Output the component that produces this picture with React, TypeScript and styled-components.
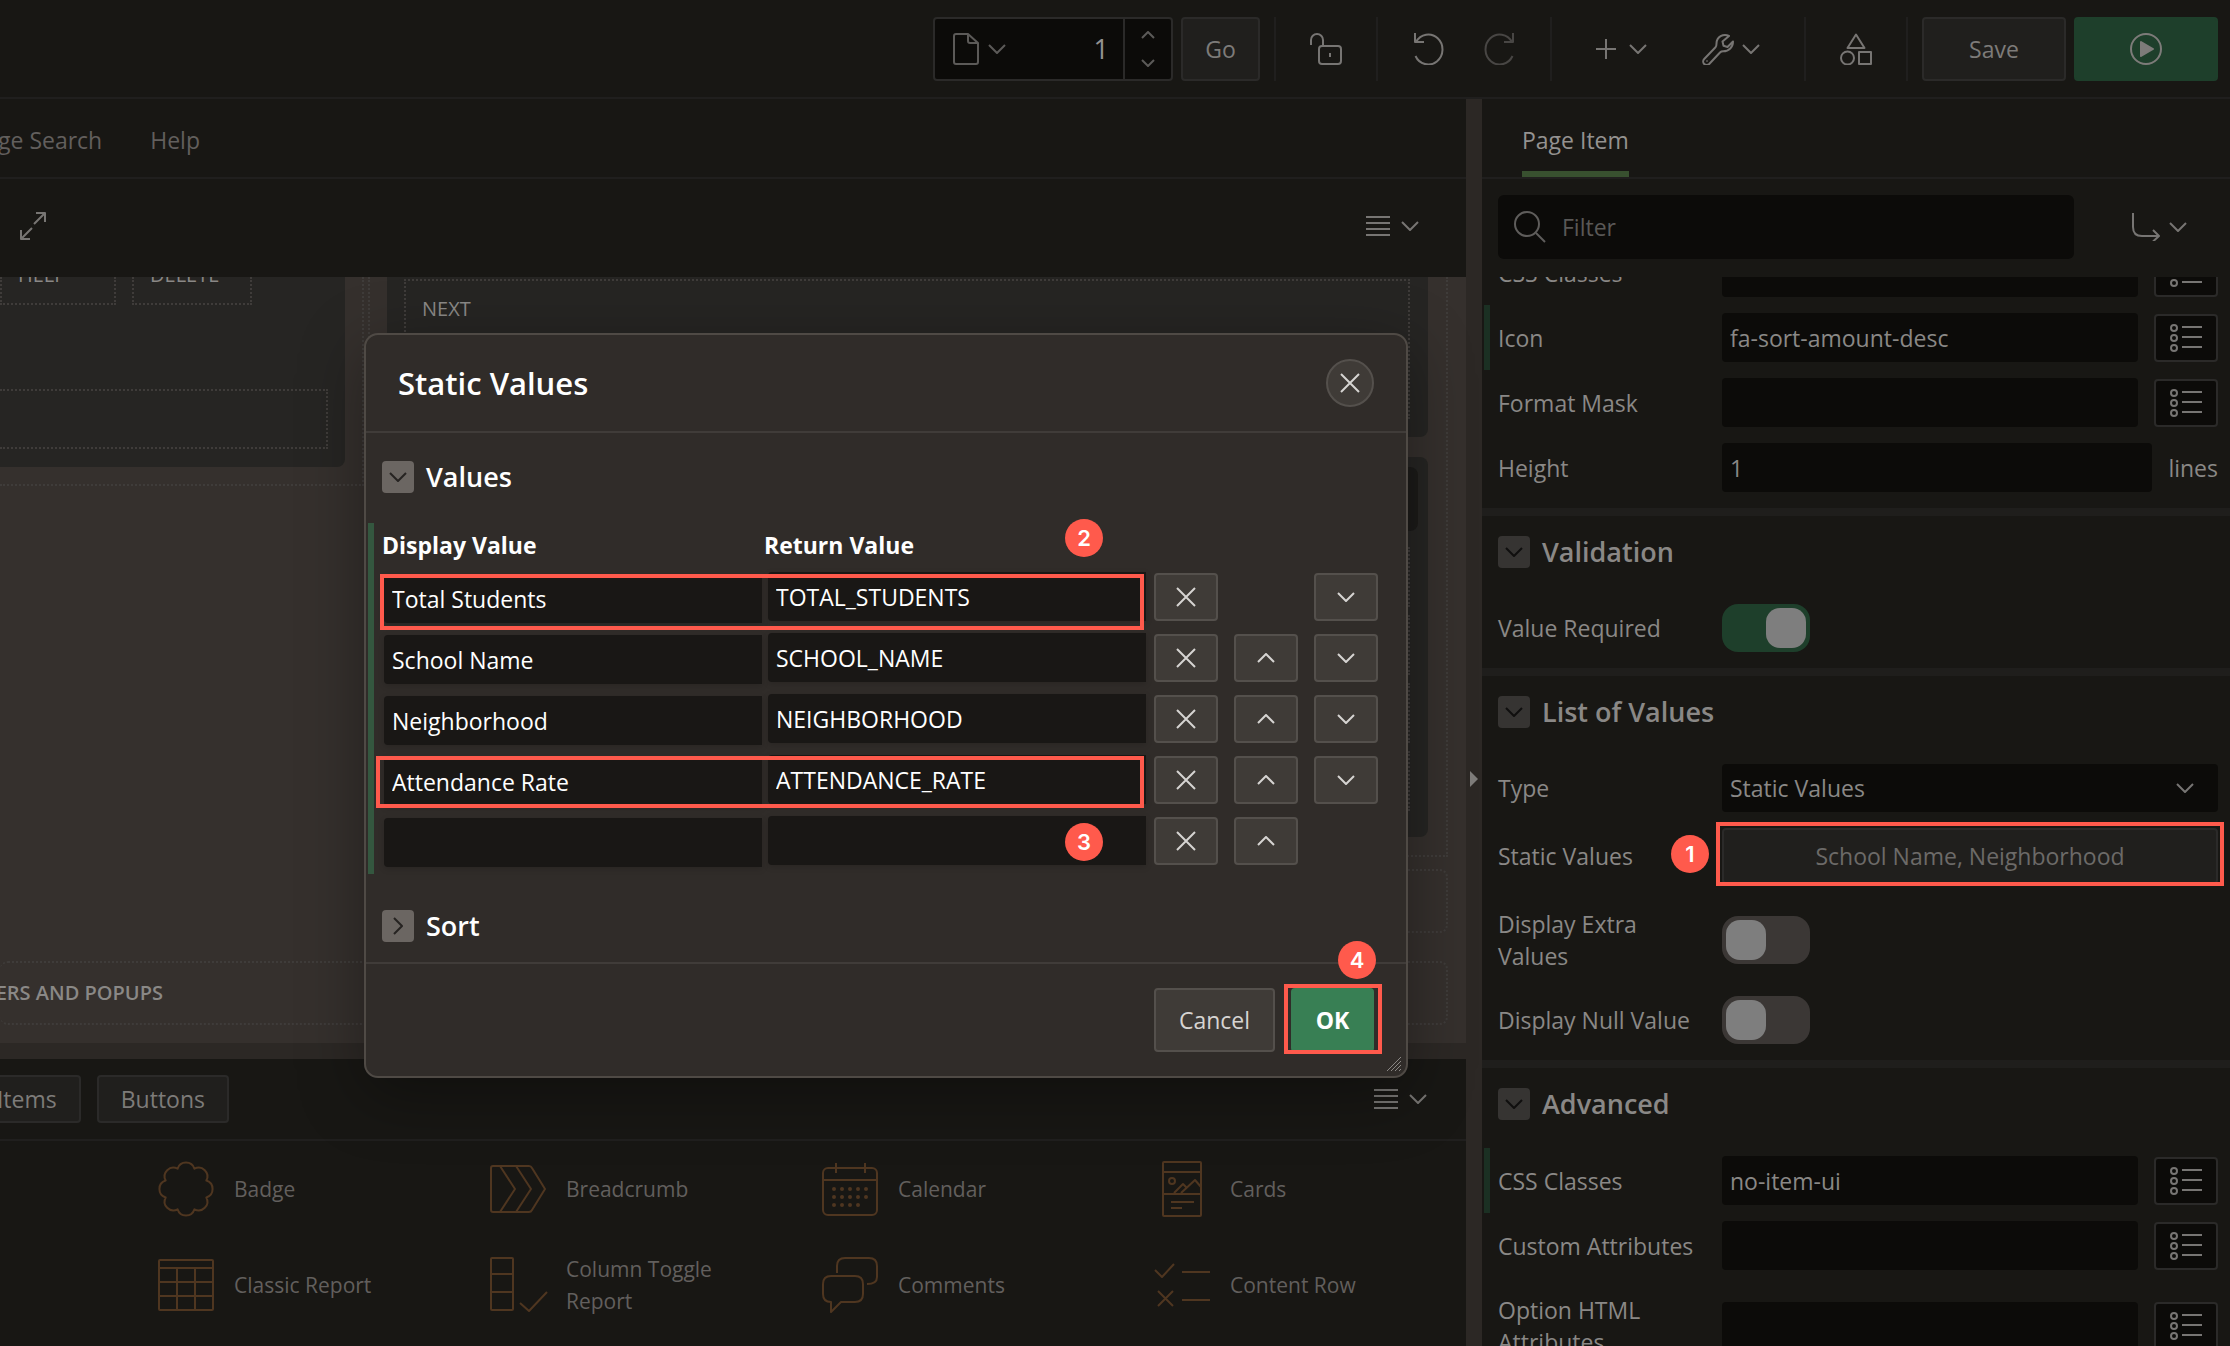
import React, { useLayoutEffect, useRef } from "react";
import styled, { createGlobalStyle, css } from "styled-components";

const c = {
  panel: "#181714",
  field: "#0c0b09",
  line: "#201f1e",
  button: "#201f1d",
  buttonLine: "#2b2a29",
  splitter: "#2c2825",
  canvas: "#35302d",
  card: "#262523",
  dotted: "#3f3c3a",
  text: "#8a8886",
  strong: "#949290",
  muted: "#625f5d",
  icon: "#777573",
  dimIcon: "#5c5a58",
  dialog: "#302c29",
  dialogLine: "#403c39",
  dialogButton: "#3f3b37",
  dialogButtonLine: "#54504c",
  mark: "#ff5a4c",
  brown: "#4f3620",
};

const GlobalStyle = createGlobalStyle`
  *, *::before, *::after { box-sizing: border-box; }
  body {
    margin: 0;
    background: ${c.panel};
    color: ${c.text};
    font: 23px/32px "Open Sans", "Noto Sans", sans-serif;
    overflow: hidden;
  }
  button, input, select { font: inherit; color: inherit; }
  button { cursor: pointer; }
`;

/* ---------- Icons ---------- */

type IconProps = { w: number; h: number; children: React.ReactNode; color?: string; sw?: number };
const Glyph = styled.svg`
  display: block;
  flex: none;
  fill: none;
  stroke: currentColor;
  stroke-linejoin: round;
`;
const Icon = ({ w, h, children, color, sw = 2 }: IconProps) => (
  <Glyph width={w} height={h} viewBox={`0 0 ${w} ${h}`} strokeWidth={sw} color={color} aria-hidden="true">
    {children}
  </Glyph>
);

const ChevronDown = () => <Icon w={18} h={10}><path d="M1 1l8 8 8-8" /></Icon>;
const ChevronUp = () => <Icon w={18} h={10}><path d="M1 9l8-8 8 8" /></Icon>;
const ChevronRight = () => <Icon w={10} h={18}><path d="M1 1l8 8-8 8" /></Icon>;
const TinyDown = () => <Icon w={14} h={8}><path d="M1 1l6 6 6-6" /></Icon>;
const TinyUp = () => <Icon w={14} h={8}><path d="M1 7l6-6 6 6" /></Icon>;
const Cross = () => <Icon w={20} h={20}><path d="M1 1l18 18M19 1L1 19" /></Icon>;
const MenuLines = () => <Icon w={24} h={20}><path d="M0 1h24M0 7h24M0 13h24M0 19h24" /></Icon>;
const FileIcon = () => <Icon w={26} h={32}><path d="M3 1h12l10 9v19q0 2-2 2H3q-2 0-2-2V3q0-2 2-2zM15 1v7q0 2 2 2h8" /></Icon>;
const LockIcon = () => (
  <Icon w={32} h={32}><rect x="9" y="13" width="22" height="18" rx="3" /><path d="M1 12V7a6 6 0 0 1 12 0v6M20 20v4" /></Icon>
);
const UndoIcon = () => <Icon w={30} h={32}><path d="M1 0v9h9M2 9A14.2 15 0 1 1 1.500 23" /></Icon>;
const RedoIcon = () => <Icon w={30} h={32}><path d="M29 0v9h-9M28 9A14.200 15 0 1 0 28.500 23" /></Icon>;
const PlusIcon = () => <Icon w={20} h={20}><path d="M10 0v20M0 10h20" /></Icon>;
const WrenchIcon = () => (
  <Icon w={32} h={32}>
    <path d="M27 3A8.500 8.500 0 0 0 14.500 10.500c0 2-.3 3-1 3.700L2.200 26a3.500 3.500 0 0 0 5 5L18 19.500c.8-.8 1.800-1.200 3.200-1.200C27 18.300 31 14 31 8.500l-5.500 5.500-4-1.200-1-4.300z" />
    <path d="M5 27.500v1" />
  </Icon>
);
const ShapesIcon = () => (
  <Icon w={32} h={32}><path d="M16 1.500L24.500 15h-17z" /><circle cx="7.500" cy="25" r="6.500" /><rect x="19" y="19" width="12" height="12" /></Icon>
);
const PlayIcon = () => (
  <Icon w={32} h={32}><circle cx="16" cy="16" r="15" /><path d="M11 9l12 7-12 7z" fill="currentColor" /></Icon>
);
const ExpandIcon = () => (
  <Icon w={26} h={28}><path d="M16 1h9v9M25 1L14 12M10 27H1v-9M1 27l11-11" /></Icon>
);
const SearchIcon = () => <Icon w={32} h={32}><circle cx="13" cy="13" r="12" /><path d="M22 22l9 9" /></Icon>;
const GoToIcon = () => <Icon w={28} h={28}><path d="M1 0v14q0 9 9 9h17M21 17l6 6-6 5.500" /></Icon>;
const ListIcon = () => (
  <Icon w={32} h={28}>
    <circle cx="4" cy="4" r="3" /><circle cx="4" cy="14" r="3" /><circle cx="4" cy="24" r="3" />
    <path d="M12 3h20M12 13h20M12 23h20" />
  </Icon>
);
const GripIcon = () => <Icon w={16} h={16} sw={1}><path d="M1 15L15 1M5 15L15 5M9 15l6-6M13 15l2-2" /></Icon>;

const rosette = (() => {
  const pts = Array.from({ length: 8 }, (_, i) => {
    const a = ((22.5 + 45 * i) * Math.PI) / 180;
    return `${(28 + 22 * Math.cos(a)).toFixed(2)} ${(28 + 22 * Math.sin(a)).toFixed(2)}`;
  });
  return `M${pts[7]}` + pts.map((p) => `A8.800 8.800 0 0 1 ${p}`).join("") + "z";
})();

const BadgeIcon = () => <Icon w={56} h={56}><path d={rosette} /></Icon>;
const BreadcrumbIcon = () => (
  <Icon w={56} h={48}><path d="M3 1h36q2 0 3 2l13 21-13 21q-1 2-3 2H3q-2 0-2-2V3q0-2 2-2zM10 1l15 23-15 23M26 1l15 23-15 23" /></Icon>
);
const CalendarIcon = () => (
  <Icon w={56} h={54}>
    <rect x="1" y="6" width="54" height="47" rx="5" />
    <path d="M1 18h54M14 1v10M43 1v10" />
    {[27, 35, 43].map((y) =>
      [12, 20, 28, 36, 44].filter((x) => !(y === 43 && x === 44)).map((x) => (
        <circle key={`${x}-${y}`} cx={x} cy={y} r="2" fill="currentColor" stroke="none" />
      ))
    )}
  </Icon>
);
const CardsIcon = () => (
  <Icon w={40} h={56}>
    <rect x="1" y="1" width="38" height="54" rx="1" />
    <path d="M1 11h38M1 33h38M12 32l9-9 4 4M19 32l14-13 6 7M9 41h23M9 47h11" />
    <circle cx="10" cy="20" r="3" />
  </Icon>
);
const TableIcon = () => (
  <Icon w={56} h={52}><rect x="1" y="1" width="54" height="50" rx="1" /><path d="M1 9h54M1 23h54M1 37h54M19 9v42M37 9v42" /></Icon>
);
const ColumnToggleIcon = () => (
  <Icon w={58} h={56}><rect x="1" y="1" width="22" height="52" rx="1" /><path d="M1 17h22M1 35h22M30 46l9 8 18-19" /></Icon>
);
const CommentsIcon = () => (
  <Icon w={56} h={56}>
    <path d="M15 16V9q0-8 8-8h24q8 0 8 8v11q0 7-10 7" />
    <path d="M9 19h24q8 0 8 8v10q0 8-8 8H19L9 55V45q-8 0-8-8V27q0-8 8-8z" />
  </Icon>
);
const ContentRowIcon = () => (
  <Icon w={56} h={44}><path d="M1 7l7 7L20 1M4 28l15 15M19 28L4 43M28 9h28M28 37h28" /></Icon>
);

/* ---------- Shared controls ---------- */

const IconButton = styled.button<{ $gap?: number; $dim?: boolean }>`
  display: flex;
  align-items: center;
  gap: ${(p) => p.$gap ?? 11}px;
  padding: 0;
  border: 0;
  background: none;
  color: ${(p) => (p.$dim ? c.dimIcon : c.icon)};
  &:disabled { color: #484644; }
`;

const Button = styled.button<{ $width?: number; $height?: number; $primary?: boolean }>`
  display: flex;
  align-items: center;
  justify-content: center;
  flex: none;
  width: ${(p) => (p.$width ? `${p.$width}px` : "auto")};
  height: ${(p) => p.$height ?? 64}px;
  padding: 0 22px;
  border: 2px solid ${(p) => (p.$primary ? "#1e3f2b" : c.buttonLine)};
  border-radius: 4px;
  background: ${(p) => (p.$primary ? "#1e3f2b" : c.button)};
  color: #7d7b79;
`;

const Field = styled.input`
  flex: 1;
  min-width: 0;
  height: 49px;
  padding: 0 8px;
  border: 0;
  border-radius: 4px;
  background: ${c.field};
  color: ${c.text};
  outline: none;
`;

const Toggle = styled.button<{ $light?: boolean }>`
  display: grid;
  place-items: center;
  width: 32px;
  height: 32px;
  padding: 0;
  border: 0;
  border-radius: 4px;
  background: ${(p) => (p.$light ? "#6b6662" : "#363432")};
  color: ${(p) => (p.$light ? "#262321" : "#100f0e")};
`;

const SectionTitle = styled.h2`
  margin: 0;
  font-size: 27px;
  font-weight: 600;
  line-height: 32px;
`;

const Switch = styled.input.attrs({ type: "checkbox", role: "switch" })`
  appearance: none;
  flex: none;
  width: 88px;
  height: 48px;
  margin: 0;
  padding: 4px;
  border-radius: 16px;
  background: #3b3735;
  &::before {
    content: "";
    display: block;
    width: 40px;
    height: 40px;
    border-radius: 14px;
    background: #7e7e7e;
  }
  &:checked { background: #1e3f2b; }
  &:checked::before { margin-left: 40px; }
`;

const NumberPin = styled.span<{ $x: number; $y: number }>`
  position: absolute;
  left: ${(p) => p.$x}px;
  top: ${(p) => p.$y}px;
  display: grid;
  place-items: center;
  width: 38px;
  height: 38px;
  border-radius: 50%;
  background: ${c.mark};
  color: #fff;
  font: 600 22px/38px Inter, "Liberation Sans", sans-serif;
`;

const Outline = styled.span<{ $x: number; $y: number; $w: number; $h: number }>`
  position: absolute;
  left: ${(p) => p.$x}px;
  top: ${(p) => p.$y}px;
  width: ${(p) => p.$w}px;
  height: ${(p) => p.$h}px;
  border: 4px solid ${c.mark};
  pointer-events: none;
`;

/* ---------- Page frame ---------- */

const Page = styled.div`
  display: flex;
  flex-direction: column;
  height: 100vh;
`;

const TopBar = styled.header`
  display: flex;
  align-items: center;
  justify-content: flex-end;
  flex: none;
  height: 99px;
  padding: 0 12px;
  border-bottom: 2px solid ${c.line};
`;

const ToolGroup = styled.div<{ $pad: number; $gap?: number }>`
  display: flex;
  align-items: center;
  height: 64px;
  gap: ${(p) => p.$gap ?? 0}px;
  padding: 0 ${(p) => p.$pad}px;
  border-left: 2px solid ${c.line};
`;

const PagePicker = styled.div`
  display: flex;
  height: 64px;
  width: 240px;
  border: 2px solid ${c.buttonLine};
  border-radius: 4px;
  background: ${c.field};
  padding-left: 18px;
`;
const PageNumber = styled.input`
  flex: 1;
  min-width: 0;
  padding: 0 14px;
  border: 0;
  background: none;
  font-size: 27px;
  text-align: right;
  color: ${c.strong};
`;
const Spinner = styled.div`
  display: flex;
  flex-direction: column;
  align-items: center;
  justify-content: space-between;
  width: 48px;
  padding: 12px 0;
  border-left: 2px solid ${c.buttonLine};
`;
const GoWrap = styled.div`
  display: flex;
  gap: 8px;
  padding-right: 14px;
`;
const SaveWrap = styled.div`
  display: flex;
  gap: 8px;
  padding-left: 14px;
  border-left: 2px solid ${c.line};
`;

const Workspace = styled.div`
  display: grid;
  grid-template-columns: minmax(0, 1fr) 16px 748px;
  flex: 1;
  min-height: 0;
`;
const MainColumn = styled.main`
  display: flex;
  flex-direction: column;
  min-width: 0;
  min-height: 0;
`;
const SideSplitter = styled.div`
  display: flex;
  align-items: center;
  justify-content: center;
  padding-top: 112px;
  background: ${c.splitter};
`;
const SplitterArrow = styled.span`
  border: 8px solid transparent;
  border-width: 8px 0 8px 8px;
  border-left-color: #7f7d7b;
`;

const TabStrip = styled.nav<{ $indent?: number }>`
  display: flex;
  flex: none;
  height: 80px;
  border-bottom: 2px solid ${c.line};
  padding-left: ${(p) => p.$indent ?? 0}px;
`;
const ClippedEnd = styled.div<{ $width: number; $gap: number }>`
  display: flex;
  align-items: center;
  justify-content: flex-end;
  width: ${(p) => p.$width}px;
  gap: ${(p) => p.$gap}px;
  overflow: hidden;
  white-space: nowrap;
`;
const Tab = styled.a<{ $active?: boolean }>`
  flex: none;
  padding: 25px 0 14px;
  height: 78px;
  text-decoration: none;
  color: ${(p) => (p.$active ? c.strong : c.muted)};
  ${(p) => p.$active && css`border-bottom: 6px solid #38502f;`}
`;

const Toolbar = styled.div`
  display: flex;
  align-items: center;
  justify-content: space-between;
  flex: none;
  height: 98px;
  padding: 0 47px 4px 20px;
`;

/* ---------- Layout canvas ---------- */

const Canvas = styled.section`
  display: flex;
  flex-direction: column;
  flex: 1;
  min-height: 0;
  overflow: hidden;
  padding-right: 18px;
  background: ${c.canvas};
`;
const Columns = styled.div`
  display: flex;
  gap: 4px;
`;
const dots = css`border: 2px dotted ${c.dotted};`;
const LeftRegion = styled.div`
  ${dots}
  border-top: 0;
  border-left: 0;
  align-self: flex-start;
  width: 364px;
  padding: 0 17px 17px 0;
`;
const RightColumn = styled.div`
  flex: 1;
  display: flex;
  flex-direction: column;
  gap: 12px;
`;
const RightRegion = styled.div`
  ${dots}
  border-top: 0;
  display: flex;
  flex-direction: column;
  gap: 20px;
  padding: 0 18px 18px 17px;
`;
const Card = styled.div<{ $radius: string }>`
  background: ${c.card};
  border-radius: ${(p) => p.$radius};
`;
const LeftCard = styled(Card)`
  height: 190px;
  padding-right: 17px;
`;
const SlotRow = styled.div`
  display: flex;
  gap: 16px;
`;
const Slot = styled.div<{ $width: number }>`
  ${dots}
  border-top: 0;
  display: flex;
  align-items: flex-end;
  justify-content: flex-start;
  width: ${(p) => p.$width}px;
  height: 28px;
  padding: 0 16px 12px;
  overflow: hidden;
  font-size: 20px;
`;
const WideSlot = styled.div`
  ${dots}
  border-left: 0;
  height: 60px;
  margin-top: 84px;
`;
const NextCard = styled(Card)`
  height: 160px;
  padding: 2px 18px 18px 17px;
`;
const NextSlot = styled.div`
  ${dots}
  height: 140px;
  padding: 12px 16px;
  font-size: 20px;
`;
const BodyCard = styled(Card)`
  height: 380px;
  padding: 10px;
`;
const BodyHeader = styled.div`
  height: 64px;
  border-radius: 8px;
  background: #1c1b19;
`;
const BodySlots = styled.div`
  display: grid;
  gap: 8px;
  padding: 16px 8px;
`;
const BodySlot = styled.div`
  ${dots}
  height: 60px;
`;
const Strip = styled.div`
  ${dots}
  flex: none;
  height: 64px;
  border-radius: 8px;
`;
const FooterStrip = styled(Strip)`
  display: flex;
  align-items: center;
  margin-top: 28px;
  border-left: 0;
  font-size: 20px;
  font-weight: 600;
  line-height: 28px;
`;

/* ---------- Gallery ---------- */

const RowSplitter = styled.div`
  flex: none;
  height: 16px;
  background: ${c.splitter};
`;
const Gallery = styled.section`
  flex: none;
  height: 287px;
  overflow: hidden;
`;
const GalleryBar = styled.div`
  display: flex;
  align-items: center;
  justify-content: space-between;
  height: 82px;
  padding-right: 39px;
  border-bottom: 2px solid ${c.line};
`;
const GalleryGrid = styled.ul`
  display: grid;
  grid-template-columns: repeat(4, minmax(332px, 1fr));
  grid-auto-rows: 96px;
  margin: 0;
  padding: 0 0 0 142px;
  list-style: none;
`;
const GalleryItem = styled.li`
  display: flex;
  align-items: center;
  gap: 20px;
  padding-left: 16px;
  font-size: 21px;
  color: ${c.muted};
`;
const GalleryIcon = styled.span`
  display: grid;
  place-items: center;
  flex: none;
  width: 56px;
  color: ${c.brown};
`;
const GalleryLabel = styled.span`
  max-width: 170px;
`;

/* ---------- Property panel ---------- */

const Side = styled.aside`
  display: flex;
  flex-direction: column;
  min-height: 0;
`;
const FilterBar = styled.div`
  display: flex;
  align-items: center;
  justify-content: space-between;
  flex: none;
  height: 98px;
  padding: 0 43px 2px 16px;
`;
const FilterBox = styled.label`
  display: flex;
  align-items: center;
  gap: 8px;
  width: 576px;
  height: 64px;
  padding: 0 16px;
  border-radius: 6px;
  background: ${c.field};
  color: #5f5d5b;
`;
const FilterInput = styled(Field)`
  background: none;
  &::placeholder { color: #5a5856; opacity: 1; }
`;
const Scroller = styled.div`
  flex: 1;
  min-height: 0;
  overflow: hidden;
`;
const Group = styled.section`
  padding-bottom: 8px;
  & + & { border-top: 8px solid #1f1e1c; }
`;
const GroupHead = styled.div`
  display: flex;
  align-items: center;
  gap: 12px;
  padding: 20px 16px 28px;
  color: ${c.text};
`;
const PropRow = styled.div<{ $changed?: boolean }>`
  display: grid;
  grid-template-columns: 216px minmax(0, 1fr);
  align-items: center;
  column-gap: 16px;
  margin-left: 2px;
  padding-right: 12px;
  border-left: 6px solid ${(p) => (p.$changed ? "#1b3023" : "transparent")};
`;
const PropLabel = styled.label`
  padding: 16px 0 16px 8px;
`;
const PropControl = styled.div`
  position: relative;
  display: flex;
  align-items: center;
  gap: 16px;
  padding: 8px 0;
`;
const ListButton = styled.button`
  display: grid;
  place-items: center;
  flex: none;
  width: 64px;
  height: 48px;
  padding: 0;
  border: 2px solid ${c.buttonLine};
  border-radius: 4px;
  background: ${c.field};
  color: ${c.icon};
`;
const Select = styled.select`
  appearance: none;
  flex: 1;
  height: 48px;
  padding: 0 8px;
  border: 0;
  border-radius: 4px;
  background: ${c.field};
  color: ${c.text};
`;
const SelectArrow = styled.span`
  position: absolute;
  right: 24px;
  color: ${c.icon};
  pointer-events: none;
`;
const Anchor = styled.div`
  position: relative;
  flex: 1;
`;
const ValuesButton = styled(Button)`
  width: 100%;
  color: #6c6a68;
`;

/* ---------- Dialog ---------- */

const Dialog = styled.div`
  position: absolute;
  left: 364px;
  top: 333px;
  width: 1044px;
  border: 2px solid #4f4a45;
  border-radius: 14px;
  background: ${c.dialog};
  box-shadow: 0 16px 64px rgba(0, 0, 0, 0.35);
  color: #fff;
`;
const DialogHead = styled.div`
  display: flex;
  align-items: center;
  justify-content: space-between;
  height: 98px;
  padding: 0 32px;
  border-bottom: 2px solid ${c.dialogLine};
`;
const DialogTitle = styled.h1`
  margin: 0;
  font-size: 31px;
  line-height: 40px;
  font-weight: 600;
`;
const DialogButton = styled(Button)<{ $round?: boolean; $ok?: boolean }>`
  padding: 0;
  border-color: ${(p) => (p.$ok ? "#387f54" : c.dialogButtonLine)};
  border-radius: ${(p) => (p.$round ? "50%" : "4px")};
  background: ${(p) => (p.$ok ? "#387f54" : c.dialogButton)};
  color: ${(p) => (p.$ok ? "#fff" : "#d6d4d2")};
  font-weight: ${(p) => (p.$ok ? 700 : 400)};
`;
const DialogBody = styled.div`
  height: 529px;
  overflow: hidden;
  padding-left: 2px;
`;
const DialogGroupHead = styled.div`
  display: flex;
  align-items: center;
  gap: 12px;
  padding: 28px 14px 30px;
`;
const ChangedBlock = styled.div`
  margin-bottom: 8px;
  padding-bottom: 3px;
  border-left: 6px solid #34573f;
`;
const Grid = styled.table`
  width: 1020px;
  border-collapse: collapse;
  table-layout: fixed;
  th {
    height: 43px;
    padding: 0;
    text-align: left;
    font-weight: 700;
  }
  th:first-child { padding-left: 8px; }
  td { height: 61px; padding: 0; }
  td:nth-child(1) { padding: 4px 0 0 10px; }
  td:nth-child(2) { padding-left: 4px; }
`;
const Cell = styled(Field)`
  display: block;
  width: 378px;
  border-radius: 4px 0 0 4px;
  background: #191715;
  color: #fff;
  box-shadow: 0 2px 6px rgba(0, 0, 0, 0.15);
`;
const DialogFoot = styled.div`
  display: flex;
  justify-content: flex-end;
  gap: 16px;
  padding: 24px 32px;
  border-top: 2px solid ${c.dialogLine};
`;
const Grip = styled.span`
  position: absolute;
  right: 4px;
  bottom: 4px;
  color: #8a8784;
`;

/* ---------- Data ---------- */

const VALUES = [
  ["Total Students", "TOTAL_STUDENTS"],
  ["School Name", "SCHOOL_NAME"],
  ["Neighborhood", "NEIGHBORHOOD"],
  ["Attendance Rate", "ATTENDANCE_RATE"],
  ["", ""],
];

const COMPONENTS: [string, React.ReactNode][] = [
  ["Badge", <BadgeIcon />],
  ["Breadcrumb", <BreadcrumbIcon />],
  ["Calendar", <CalendarIcon />],
  ["Cards", <CardsIcon />],
  ["Classic Report", <TableIcon />],
  ["Column Toggle Report", <ColumnToggleIcon />],
  ["Comments", <CommentsIcon />],
  ["Content Row", <ContentRowIcon />],
];

const SCROLL_START = 37;

/* ---------- Components ---------- */

const TextProp = ({ id, label, value = "", list, changed, unit }: {
  id: string; label: string; value?: string; list?: boolean; changed?: boolean; unit?: string;
}) => (
  <PropRow $changed={changed}>
    <PropLabel htmlFor={id}>{label}</PropLabel>
    <PropControl>
      <Field id={id} defaultValue={value} />
      {list && <ListButton aria-label={`Pick ${label}`}><ListIcon /></ListButton>}
      {unit && <span>{unit}</span>}
    </PropControl>
  </PropRow>
);

const SwitchProp = ({ id, label, on }: { id: string; label: string; on?: boolean }) => (
  <PropRow>
    <PropLabel htmlFor={id}>{label}</PropLabel>
    <PropControl><Switch id={id} defaultChecked={on} /></PropControl>
  </PropRow>
);

const PropGroup = ({ title, children }: { title: string; children: React.ReactNode }) => (
  <Group>
    <GroupHead>
      <Toggle aria-label={`Collapse ${title}`}><ChevronDown /></Toggle>
      <SectionTitle>{title}</SectionTitle>
    </GroupHead>
    {children}
  </Group>
);

function Properties() {
  const scroller = useRef<HTMLDivElement>(null);
  useLayoutEffect(() => {
    if (scroller.current) scroller.current.scrollTop = SCROLL_START;
  }, []);
  return (
    <Side>
      <TabStrip $indent={40}><Tab href="#item" $active>Page Item</Tab></TabStrip>
      <FilterBar>
        <FilterBox>
          <SearchIcon />
          <FilterInput placeholder="Filter" aria-label="Filter" />
        </FilterBox>
        <IconButton aria-label="Go to group" $gap={9}><GoToIcon /><ChevronDown /></IconButton>
      </FilterBar>
      <Scroller ref={scroller}>
        <Group>
          <TextProp id="css1" label="CSS Classes" list />
          <TextProp id="icon" label="Icon" value="fa-sort-amount-desc" list changed />
          <TextProp id="mask" label="Format Mask" list />
          <TextProp id="height" label="Height" value="1" unit="lines" />
        </Group>
        <PropGroup title="Validation">
          <SwitchProp id="required" label="Value Required" on />
        </PropGroup>
        <PropGroup title="List of Values">
          <PropRow>
            <PropLabel htmlFor="type">Type</PropLabel>
            <PropControl>
              <Select id="type" defaultValue="static"><option value="static">Static Values</option></Select>
              <SelectArrow><ChevronDown /></SelectArrow>
            </PropControl>
          </PropRow>
          <PropRow>
            <PropLabel htmlFor="static">Static Values</PropLabel>
            <PropControl>
              <Anchor>
                <ValuesButton id="static" $height={56}>School Name, Neighborhood</ValuesButton>
                <Outline $x={-6} $y={-6} $w={508} $h={64} />
                <NumberPin $x={-51} $y={7}>1</NumberPin>
              </Anchor>
            </PropControl>
          </PropRow>
          <SwitchProp id="extra" label="Display Extra Values" />
          <SwitchProp id="null" label="Display Null Value" />
        </PropGroup>
        <PropGroup title="Advanced">
          <TextProp id="css2" label="CSS Classes" value="no-item-ui" list changed />
          <TextProp id="custom" label="Custom Attributes" list />
          <TextProp id="option" label="Option HTML Attributes" list />
        </PropGroup>
      </Scroller>
    </Side>
  );
}

const StaticValuesDialog = () => (
  <Dialog role="dialog" aria-labelledby="dialog-title">
    <DialogHead>
      <DialogTitle id="dialog-title">Static Values</DialogTitle>
      <DialogButton $round $width={48} $height={48} aria-label="Close"><Cross /></DialogButton>
    </DialogHead>
    <DialogBody>
      <DialogGroupHead>
        <Toggle $light aria-label="Collapse Values"><ChevronDown /></Toggle>
        <SectionTitle>Values</SectionTitle>
      </DialogGroupHead>
      <ChangedBlock>
        <Grid>
          <colgroup>
            <col width="390" /><col width="390" /><col width="80" /><col width="80" /><col width="80" />
          </colgroup>
          <thead>
            <tr><th>Display Value</th><th>Return Value</th><th colSpan={3} aria-label="Actions" /></tr>
          </thead>
          <tbody>
            {VALUES.map(([display, value], i) => (
              <tr key={i}>
                <td><Cell defaultValue={display} aria-label={`Display value ${i + 1}`} /></td>
                <td><Cell defaultValue={value} aria-label={`Return value ${i + 1}`} /></td>
                <td><DialogButton $width={64} $height={48} aria-label="Remove"><Cross /></DialogButton></td>
                <td>{i > 0 && <DialogButton $width={64} $height={48} aria-label="Move up"><ChevronUp /></DialogButton>}</td>
                <td>{i < 4 && <DialogButton $width={64} $height={48} aria-label="Move down"><ChevronDown /></DialogButton>}</td>
              </tr>
            ))}
          </tbody>
        </Grid>
      </ChangedBlock>
      <DialogGroupHead>
        <Toggle $light aria-label="Expand Sort"><ChevronRight /></Toggle>
        <SectionTitle>Sort</SectionTitle>
      </DialogGroupHead>
    </DialogBody>
    <DialogFoot>
      <DialogButton $width={121}>Cancel</DialogButton>
      <DialogButton $width={83} $ok>OK</DialogButton>
    </DialogFoot>
    <Grip><GripIcon /></Grip>
    <Outline $x={14} $y={239} $w={764} $h={56} />
    <Outline $x={10} $y={421} $w={768} $h={52} />
    <Outline $x={918} $y={649} $w={98} $h={70} />
    <NumberPin $x={699} $y={184}>2</NumberPin>
    <NumberPin $x={699} $y={488}>3</NumberPin>
    <NumberPin $x={972} $y={606}>4</NumberPin>
  </Dialog>
);

const LayoutCanvas = () => (
  <Canvas>
    <Columns>
      <LeftRegion>
        <LeftCard $radius="0 0 8px 0">
          <SlotRow><Slot $width={116}>HELP</Slot><Slot $width={120}>DELETE</Slot></SlotRow>
          <WideSlot />
        </LeftCard>
      </LeftRegion>
      <RightColumn>
        <RightRegion>
          <NextCard $radius="0 0 8px 8px"><NextSlot>NEXT</NextSlot></NextCard>
          <BodyCard $radius="8px">
            <BodyHeader />
            <BodySlots><BodySlot /><BodySlot /><BodySlot /><BodySlot /></BodySlots>
          </BodyCard>
        </RightRegion>
        <Strip />
      </RightColumn>
    </Columns>
    <FooterStrip><ClippedEnd $width={163} $gap={0}><span>DIALOGS, DRAWERS AND POPUPS</span></ClippedEnd></FooterStrip>
  </Canvas>
);

export default function App() {
  return (
    <Page>
      <GlobalStyle />
      <TopBar>
        <GoWrap>
          <PagePicker>
            <IconButton $dim aria-label="Page finder" $gap={9}><FileIcon /><ChevronDown /></IconButton>
            <PageNumber defaultValue="1" aria-label="Page number" />
            <Spinner>
              <IconButton $dim aria-label="Next page"><TinyUp /></IconButton>
              <IconButton $dim aria-label="Previous page"><TinyDown /></IconButton>
            </Spinner>
          </PagePicker>
          <Button $width={79}>Go</Button>
        </GoWrap>
        <ToolGroup $pad={34}><IconButton aria-label="Lock"><LockIcon /></IconButton></ToolGroup>
        <ToolGroup $pad={36} $gap={40}>
          <IconButton aria-label="Undo"><UndoIcon /></IconButton>
          <IconButton aria-label="Redo" disabled><RedoIcon /></IconButton>
        </ToolGroup>
        <ToolGroup $pad={44} $gap={55}>
          <IconButton aria-label="Create" $gap={13}><PlusIcon /><ChevronDown /></IconButton>
          <IconButton aria-label="Utilities" $gap={8}><WrenchIcon /><ChevronDown /></IconButton>
        </ToolGroup>
        <ToolGroup $pad={34}><IconButton aria-label="Shared components"><ShapesIcon /></IconButton></ToolGroup>
        <SaveWrap>
          <Button $width={144}>Save</Button>
          <Button $width={144} $primary aria-label="Run page"><PlayIcon /></Button>
        </SaveWrap>
      </TopBar>
      <Workspace>
        <MainColumn>
          <TabStrip>
            <ClippedEnd $width={200} $gap={48}>
              <Tab href="#search">Page Search</Tab>
              <Tab href="#help">Help</Tab>
            </ClippedEnd>
          </TabStrip>
          <Toolbar>
            <IconButton aria-label="Expand"><ExpandIcon /></IconButton>
            <IconButton aria-label="Layout menu"><MenuLines /><ChevronDown /></IconButton>
          </Toolbar>
          <LayoutCanvas />
          <RowSplitter />
          <Gallery>
            <GalleryBar>
              <ClippedEnd $width={229} $gap={16}>
                <Button $height={48}>Items</Button>
                <Button $height={48}>Buttons</Button>
              </ClippedEnd>
              <IconButton aria-label="Gallery menu"><MenuLines /><ChevronDown /></IconButton>
            </GalleryBar>
            <GalleryGrid>
              {COMPONENTS.map(([name, icon]) => (
                <GalleryItem key={name}>
                  <GalleryIcon>{icon}</GalleryIcon>
                  <GalleryLabel>{name}</GalleryLabel>
                </GalleryItem>
              ))}
            </GalleryGrid>
          </Gallery>
        </MainColumn>
        <SideSplitter><SplitterArrow /></SideSplitter>
        <Properties />
      </Workspace>
      <StaticValuesDialog />
    </Page>
  );
}
